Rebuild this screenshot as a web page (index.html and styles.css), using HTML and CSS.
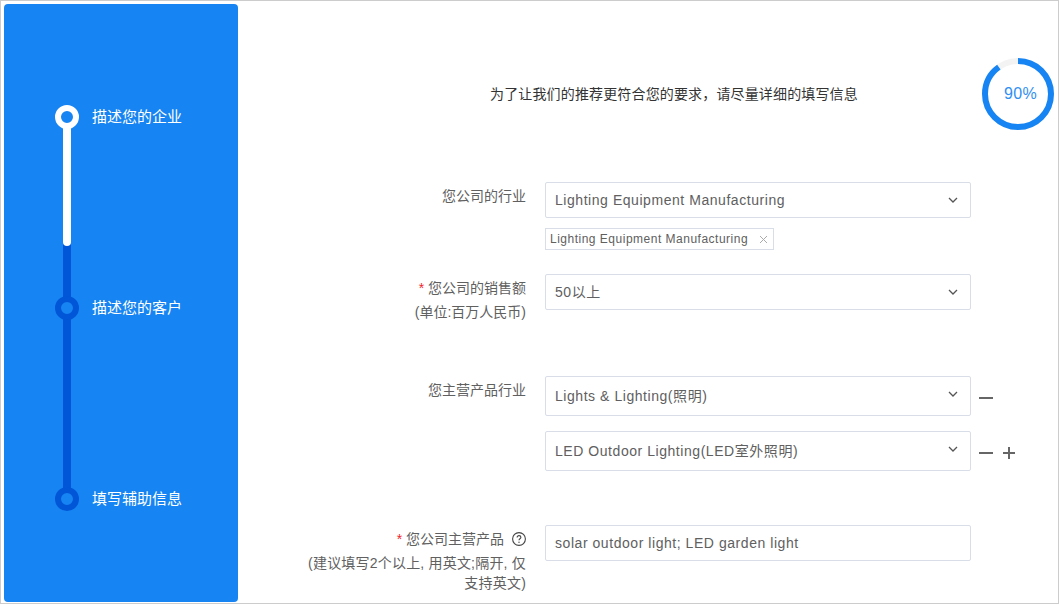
FILE: index.html
```html
<!DOCTYPE html>
<html lang="zh-CN">
  <head>
    <meta charset="UTF-8" />
    <title>描述您的企业</title>
    <link rel="stylesheet" href="styles.css">
  </head>
  <body>
    <div id="page">
      <div id="sidebar">
        <div class="step done">
          <span class="dot"></span>
          <span class="bar"><span class="bar-fill"></span></span>
          <span class="step-name">描述您的企业</span>
        </div>
        <div class="step">
          <span class="dot"></span>
          <span class="bar"></span>
          <span class="step-name">描述您的客户</span>
        </div>
        <div class="step last">
          <span class="dot"></span>
          <span class="step-name">填写辅助信息</span>
        </div>
      </div>

      <div id="main">
        <div id="head">
          <p class="tip">为了让我们的推荐更符合您的要求，请尽量详细的填写信息</p>
          <div class="progress">
            <svg width="72" height="72" viewBox="0 0 72 72">
              <circle cx="36" cy="36" r="33" fill="none" stroke="#f3f3f3" stroke-width="6" />
              <circle cx="36" cy="36" r="33" fill="none" stroke="#1684f2" stroke-width="6"
                stroke-dasharray="186.6 207.4" transform="rotate(-90 36 36)" />
            </svg>
            <span class="progress-num">90%</span>
          </div>
        </div>

        <div class="row row-industry">
          <div class="label">您公司的行业</div>
          <div class="field">
            <div class="select">
              <span>Lighting Equipment Manufacturing</span>
              <svg class="arrow" width="10" height="6" viewBox="0 0 10 6"><path d="M1 1l4 4 4-4" fill="none" stroke="#555" stroke-width="1.3" /></svg>
            </div>
            <div class="tag">
              Lighting Equipment Manufacturing
              <svg width="9" height="9" viewBox="0 0 9 9"><path d="M1 1l7 7M8 1l-7 7" stroke="#aaa" stroke-width="1" /></svg>
            </div>
          </div>
        </div>

        <div class="row row-sales">
          <div class="label">
            <div><span class="req">*</span> 您公司的销售额</div>
            <div>(单位:百万人民币)</div>
          </div>
          <div class="field">
            <div class="select">
              <span>50以上</span>
              <svg class="arrow" width="10" height="6" viewBox="0 0 10 6"><path d="M1 1l4 4 4-4" fill="none" stroke="#555" stroke-width="1.3" /></svg>
            </div>
          </div>
        </div>

        <div class="row row-products">
          <div class="label">您主营产品行业</div>
          <div class="field">
            <div class="select-line">
              <div class="select tall">
                <span>Lights &amp; Lighting(照明)</span>
                <svg class="arrow" width="10" height="6" viewBox="0 0 10 6"><path d="M1 1l4 4 4-4" fill="none" stroke="#555" stroke-width="1.3" /></svg>
              </div>
              <span class="minus"></span>
            </div>
            <div class="select-line">
              <div class="select tall">
                <span>LED Outdoor Lighting(LED室外照明)</span>
                <svg class="arrow" width="10" height="6" viewBox="0 0 10 6"><path d="M1 1l4 4 4-4" fill="none" stroke="#555" stroke-width="1.3" /></svg>
              </div>
              <span class="minus"></span>
              <span class="plus"></span>
            </div>
          </div>
        </div>

        <div class="row row-main">
          <div class="label">
            <div>
              <span class="req">*</span> 您公司主营产品
              <svg class="help" width="14" height="14" viewBox="0 0 14 14">
                <circle cx="7" cy="7" r="6.4" fill="none" stroke="#444" stroke-width="1.1" />
                <path d="M5.100 5.400c0-1.100.9-1.800 1.900-1.800s1.900.7 1.900 1.700c0 1.500-1.900 1.500-1.900 3" fill="none" stroke="#444" stroke-width="1.1" />
                <circle cx="7" cy="10.300" r=".7" fill="#444" />
              </svg>
            </div>
            <div class="hint">(建议填写2个以上, 用英文;隔开, 仅支持英文)</div>
          </div>
          <div class="field">
            <div class="input">solar outdoor light; LED garden light</div>
          </div>
        </div>
      </div>
    </div>
  </body>
</html>
```

FILE: styles.css
```css
* {
  padding: 0;
  margin: 0;
  box-sizing: border-box;
}
html,
body {
  height: 605px;
  overflow: hidden;
}
body {
  background-color: #fff;
  font-family: "Liberation Sans", "Noto Sans CJK SC", sans-serif;
  font-size: 14px;
  color: #606060;
}
#page {
  display: flex;
  height: 604px;
  padding: 3px;
  border: 1px solid #ccc;
  overflow: hidden;
}

/* left steps */
#sidebar {
  flex: none;
  width: 234px;
  height: 598px;
  padding: 101px 0 0 51px;
  background-color: #1684f2;
  border-radius: 4px;
}
.step {
  position: relative;
  display: flex;
  height: 191px;
  padding-left: 37px;
}
.step-name {
  height: 24px;
  line-height: 24px;
  font-size: 15px;
  color: #fff;
}
.dot {
  position: absolute;
  left: 0;
  top: 0;
  z-index: 1;
  width: 24px;
  height: 24px;
  border: 6px solid #0056d6;
  border-radius: 50%;
}
.bar {
  position: absolute;
  left: 8px;
  top: 20px;
  width: 8px;
  height: 176px;
  background-color: #0056d6;
}
.done .dot {
  border-color: #fff;
}
.bar-fill {
  display: block;
  height: 121px;
  background-color: #fff;
  border-radius: 0 0 4px 4px;
}

/* right form */
#main {
  flex: 1;
  min-width: 0;
}
#head {
  display: flex;
  align-items: center;
  height: 126px;
  padding-top: 54px;
}
.tip {
  width: 744px;
  padding: 0 0 3px 252px;
  color: #333;
  letter-spacing: 0.15px;
}
.progress {
  position: relative;
  width: 72px;
  height: 72px;
}
.progress svg {
  display: block;
}
.progress-num {
  position: absolute;
  left: 0;
  top: 0;
  width: 100%;
  padding-left: 5px;
  line-height: 72px;
  text-align: center;
  font-size: 16px;
  letter-spacing: 0.3px;
  color: #2f8ff3;
}
.row {
  display: flex;
}
.label {
  flex: none;
  width: 288px;
  padding-top: 2px;
  text-align: right;
  line-height: 24px;
}
.field {
  flex: none;
  margin-left: 19px;
}
.row-industry {
  margin-top: 52px;
}
.row-sales {
  margin-top: 24px;
}
.row-products {
  margin-top: 52px;
}
.row-main {
  margin-top: 39px;
}
.req {
  color: #f5222d;
}
.select,
.input {
  display: flex;
  align-items: center;
  justify-content: space-between;
  width: 426px;
  height: 36px;
  padding: 0 12px 0 9px;
  border: 1px solid #d9dde8;
  border-radius: 2px;
  line-height: 20px;
  letter-spacing: 0.55px;
}
.tall {
  height: 40px;
}
.tall .arrow {
  margin-top: -5px;
}
.tag {
  display: flex;
  align-items: center;
  gap: 11px;
  width: 229px;
  height: 22px;
  margin-top: 10px;
  padding-left: 4px;
  border: 1px solid #d9dde8;
  font-size: 12px;
  letter-spacing: 0.5px;
}
.select-line {
  display: flex;
  align-items: center;
  gap: 8px;
  margin-bottom: 15px;
}
.minus,
.plus {
  position: relative;
  width: 14px;
  height: 2px;
  margin-top: 4px;
  background-color: #666;
}
.plus {
  margin-left: 2px;
  width: 12px;
}
.plus::after {
  content: "";
  position: absolute;
  left: 5px;
  top: -5px;
  width: 2px;
  height: 12px;
  background-color: #666;
}
.help {
  margin-left: 4px;
  vertical-align: -2px;
}
.hint {
  margin: 2px 0 0 68px;
  line-height: 20px;
  letter-spacing: 0.2px;
}
```
